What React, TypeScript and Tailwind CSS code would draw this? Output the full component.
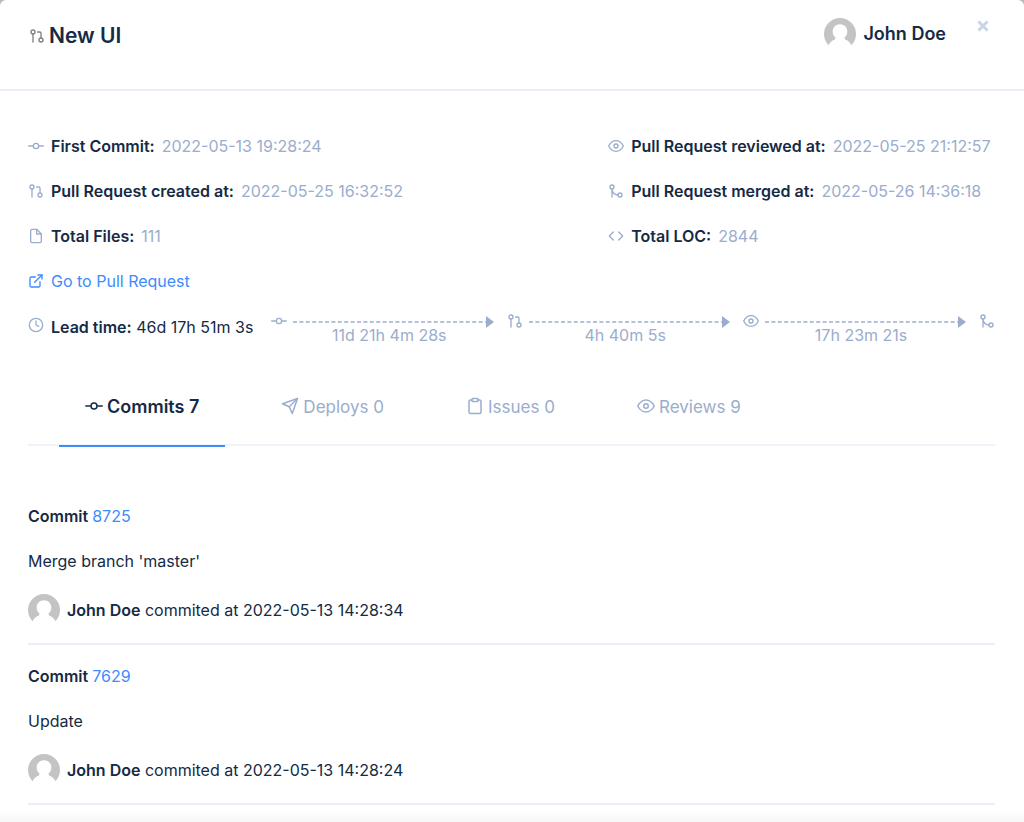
import type { ReactNode } from "react";
import type { IconType } from "react-icons";
import {
  FiClipboard,
  FiClock,
  FiCode,
  FiExternalLink,
  FiEye,
  FiFile,
  FiGitCommit,
  FiGitMerge,
  FiGitPullRequest,
  FiSend,
} from "react-icons/fi";

const leftDetails = [
  { icon: FiGitCommit, label: "First Commit:", value: "2022-05-13 19:28:24" },
  { icon: FiGitPullRequest, label: "Pull Request created at:", value: "2022-05-25 16:32:52" },
  { icon: FiFile, label: "Total Files:", value: "111" },
];

const rightDetails = [
  { icon: FiEye, label: "Pull Request reviewed at:", value: "2022-05-25 21:12:57" },
  { icon: FiGitMerge, label: "Pull Request merged at:", value: "2022-05-26 14:36:18" },
  { icon: FiCode, label: "Total LOC:", value: "2844" },
];

const steps = [
  { icon: FiGitCommit, duration: "11d 21h 4m 28s" },
  { icon: FiGitPullRequest, duration: "4h 40m 5s" },
  { icon: FiEye, duration: "17h 23m 21s" },
];

const tabs = [
  { icon: FiGitCommit, label: "Commits 7", active: true },
  { icon: FiSend, label: "Deploys 0", active: false },
  { icon: FiClipboard, label: "Issues 0", active: false },
  { icon: FiEye, label: "Reviews 9", active: false },
];

const commits = [
  { id: "8725", message: "Merge branch 'master'", author: "John Doe", date: "2022-05-13 14:28:34" },
  { id: "7629", message: "Update", author: "John Doe", date: "2022-05-13 14:28:24" },
];

function Avatar() {
  return (
    <svg viewBox="0 0 32 32" className="w-8 h-8 shrink-0" aria-hidden="true">
      <circle cx="16" cy="16" r="16" fill="#c4c4c4" />
      <path
        d="M16 6.200c-4.300 0-7.300 3.100-7.300 7.300 0 2.700 1.100 4.800 2.800 6.200.1 1-.3 1.500-1.400 2C7.500 23 5.800 24.600 4.600 27.300V33h22.800v-5.700c-1.200-2.700-2.900-4.300-5.500-5.600-1.100-.5-1.500-1-1.400-2 1.700-1.400 2.800-3.500 2.800-6.200 0-4.200-3-7.300-7.300-7.300z"
        fill="#fff"
      />
    </svg>
  );
}

function Detail({ icon: Icon, label, children }: { icon: IconType; label: string; children: ReactNode }) {
  return (
    <div className="flex items-center leading-6">
      <Icon className="w-4 h-4 mr-[7px] text-[#9aadcd]" />
      <span className="font-semibold mr-[7px]">{label}</span>
      <span className="text-[#9aadcd]">{children}</span>
    </div>
  );
}

function Timeline() {
  return (
    <div className="flex flex-1 items-start text-[#9aadcd]">
      {steps.map(({ icon: Icon, duration }) => (
        <div key={duration} className="flex-1">
          <div className="flex items-center">
            <Icon className="w-4 h-4 shrink-0" />
            <div className="flex flex-1 items-center ml-1.5 mr-[13px] pt-0.5">
              <svg className="flex-1 w-0 h-0.5" aria-hidden="true">
                <line x1="0" y1="1" x2="100%" y2="1" stroke="currentColor" strokeWidth="1.5" strokeDasharray="4 2.4" />
              </svg>
              <svg viewBox="0 0 8 12" className="w-2 h-3" aria-hidden="true">
                <path d="M0 0l8 6-8 6z" fill="currentColor" />
              </svg>
            </div>
          </div>
          <div className="-mt-1 text-center leading-5">{duration}</div>
        </div>
      ))}
      <FiGitMerge className="w-4 h-4 shrink-0" />
    </div>
  );
}

export default function App() {
  return (
    <div className="bg-[#b5b8bc]">
      <div
        role="dialog"
        aria-label="New UI"
        className="min-h-screen flex flex-col bg-white rounded-t-md text-base text-[#152a45] font-['Inter','Liberation_Sans',sans-serif]"
      >
        <header className="flex items-start pl-[29px] pr-[33px] pt-[18px] h-[91px] border-b-2 border-[#e9eff8]">
          <h1 className="flex flex-1 items-center gap-1 text-[21px] leading-9 font-semibold">
            <FiGitPullRequest className="w-4 h-4 text-[#808080]" />
            New UI
          </h1>
          <div className="flex items-center gap-[7px] mr-[29px] text-lg leading-8 font-semibold">
            <Avatar />
            John Doe
          </div>
          <button type="button" aria-label="Close" className="w-4 h-4 flex items-center justify-center text-[#c9d4e7]">
            <svg viewBox="0 0 12 12" className="w-3 h-3" aria-hidden="true">
              <path d="M1.500 1.500l9 9M10.500 1.500l-9 9" stroke="currentColor" strokeWidth="3" />
            </svg>
          </button>
        </header>

        <main className="pl-7 pr-[29px] pt-[43px]">
          <div className="flex justify-between">
            <div className="flex flex-col gap-[21px]">
              {leftDetails.map((item) => (
                <Detail key={item.label} icon={item.icon} label={item.label}>
                  {item.value}
                </Detail>
              ))}
              <a href="#pull-request" className="flex items-center gap-[7px] leading-6 text-[#3d8bfd]">
                <FiExternalLink className="w-4 h-4" />
                Go to Pull Request
              </a>
            </div>
            <div className="flex flex-col gap-[21px] w-2/5">
              {rightDetails.map((item) => (
                <Detail key={item.label} icon={item.icon} label={item.label}>
                  {item.value}
                </Detail>
              ))}
            </div>
          </div>

          <div className="flex items-start mt-5">
            <div className="flex items-start mt-0.5 mr-[18px] leading-6">
              <FiClock className="w-4 h-4 mt-0.5 mr-[7px] text-[#9aadcd]" />
              <span>
                <span className="font-semibold">Lead time:</span> 46d 17h 51m 3s
              </span>
            </div>
            <Timeline />
          </div>

          <div role="tablist" className="flex gap-[30px] px-[31px] mt-6 border-b-2 border-[#eff2f8]">
            {tabs.map(({ icon: Icon, label, active }) => (
              <button
                key={label}
                type="button"
                role="tab"
                aria-selected={active}
                className={
                  active
                    ? "flex items-center gap-1 px-[26px] pt-6 pb-6 -mb-[3px] border-b-2 border-[#3d8bfd] text-lg leading-7 font-semibold"
                    : "flex items-center gap-1 px-[26px] pt-6 pb-6 -mb-[3px] border-b-2 border-transparent text-[17px] leading-7 text-[#9aadcd]"
                }
              >
                <Icon className="w-[18px] h-[18px] mb-0.5" />
                {label}
              </button>
            ))}
          </div>

          <ul className="pt-[39px]">
            {commits.map((commit) => (
              <li key={commit.id} className="pt-[19px] pb-[17px] border-b-2 border-[#e9eff8]">
                <p className="leading-6 font-semibold">
                  Commit{" "}
                  <a href={`#commit-${commit.id}`} className="font-normal text-[#3d8bfd]">
                    {commit.id}
                  </a>
                </p>
                <p className="mt-[21px] leading-6">{commit.message}</p>
                <div className="flex items-center gap-[7px] mt-[21px] leading-8">
                  <Avatar />
                  <span>
                    <span className="font-semibold">{commit.author}</span> commited at {commit.date}
                  </span>
                </div>
              </li>
            ))}
          </ul>
        </main>
        <div className="mt-auto h-3 bg-gradient-to-b from-white to-[#f7f7f7]" />
      </div>
    </div>
  );
}
